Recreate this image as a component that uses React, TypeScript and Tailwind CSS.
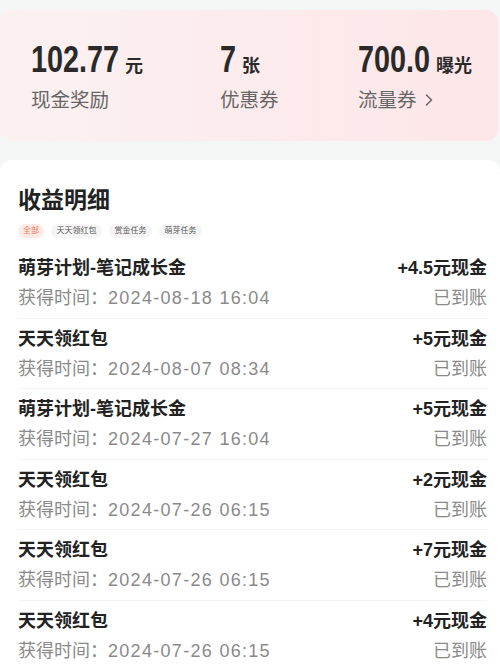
import { ChevronRight } from "lucide-react";

const CN = '"Liberation Sans", "Noto Sans CJK SC", sans-serif';
const NUM = '"Liberation Sans", sans-serif';

interface Record {
  title: string;
  time: string;
  amount: string;
}

const records: Record[] = [
  { title: "萌芽计划-笔记成长金", time: "2024-08-18 16:04", amount: "+4.5元现金" },
  { title: "天天领红包", time: "2024-08-07 08:34", amount: "+5元现金" },
  { title: "萌芽计划-笔记成长金", time: "2024-07-27 16:04", amount: "+5元现金" },
  { title: "天天领红包", time: "2024-07-26 06:15", amount: "+2元现金" },
  { title: "天天领红包", time: "2024-07-26 06:15", amount: "+7元现金" },
  { title: "天天领红包", time: "2024-07-26 06:15", amount: "+4元现金" },
];

const tabs = ["全部", "天天领红包", "赏金任务", "萌芽任务"];

// number face is squeezed horizontally to mimic the condensed DIN digits
const NUM_SIZE = 36;
const SQUEEZE = 0.8;

function squeezeMargin(value: string) {
  let w = 0;
  for (const c of value) w += c === "." ? 0.278 : 0.556;
  return -(1 - SQUEEZE) * w * NUM_SIZE;
}

function Stat({ value, unit, label, arrow }: { value: string; unit: string; label: string; arrow?: boolean }) {
  return (
    <div className="flex flex-col">
      <div className="flex items-baseline h-[40px]">
        <span
          className="inline-block origin-left scale-x-[0.8] text-[36px] font-bold leading-[40px] text-[#2a2a2a]"
          style={{ fontFamily: NUM, marginRight: squeezeMargin(value) }}
        >
          {value}
        </span>
        <span className="ml-[6px] text-[18px] font-bold text-[#2a2a2a]" style={{ fontFamily: CN }}>
          {unit}
        </span>
      </div>
      <div className="mt-[7px] flex items-center text-[19.5px] leading-[26px] text-[#666666]" style={{ fontFamily: CN }}>
        {label}
        {arrow && <ChevronRight className="ml-[2px] h-[20px] w-[20px] text-[#666666]" strokeWidth={1.8} />}
      </div>
    </div>
  );
}

export default function App() {
  return (
    <div className="min-h-[667px] w-[500px] overflow-hidden bg-[#f4f5f5] pt-[10px]" style={{ fontFamily: CN }}>
      {/* top summary card */}
      <div className="mr-[2px] rounded-xl bg-gradient-to-r from-[#fbf1f1] to-[#fde6e8] pt-[30px] pb-[28px] pl-[31px]">
        <div className="grid grid-cols-[189px_138px_1fr]">
          <Stat value="102.77" unit="元" label="现金奖励" />
          <Stat value="7" unit="张" label="优惠券" />
          <Stat value="700.0" unit="曝光" label="流量券" arrow />
        </div>
      </div>

      {/* income details */}
      <div className="mt-[19px] rounded-t-xl bg-white pl-[18px] pr-[13px] pt-[24px]">
        <h2 className="text-[23px] font-bold leading-[32px] text-[#222222]">收益明细</h2>
        <div className="mt-[8px] flex gap-[7px]">
          {tabs.map((t, i) => (
            <span
              key={t}
              className={
                i === 0
                  ? "flex h-[14px] items-center rounded-full bg-[#fdebe5] px-[5px] text-[8px] text-[#f27b5b]"
                  : "flex h-[14px] items-center rounded-full bg-[#f5f5f5] px-[5.5px] text-[8px] text-[#555555]"
              }
            >
              {t}
            </span>
          ))}
        </div>

        <div className="mt-[10px]">
          {records.map((r, i) => (
            <div key={i} className="flex justify-between border-b border-[#f3f3f3] pt-[7px] pb-[6.5px]">
              <div className="flex flex-col gap-[4px]">
                <div className="text-[18px] font-bold leading-[26px] text-[#222222]">{r.title}</div>
                <div className="text-[18px] leading-[26px] text-[#8a8a8a]">
                  获得时间：<span className="tracking-[1.3px]">{r.time}</span>
                </div>
              </div>
              <div className="flex flex-col items-end gap-[4px]">
                <div className="text-[18px] font-bold leading-[26px] text-[#222222]">{r.amount}</div>
                <div className="text-[18px] leading-[26px] text-[#8a8a8a]">已到账</div>
              </div>
            </div>
          ))}
        </div>
      </div>
    </div>
  );
}
